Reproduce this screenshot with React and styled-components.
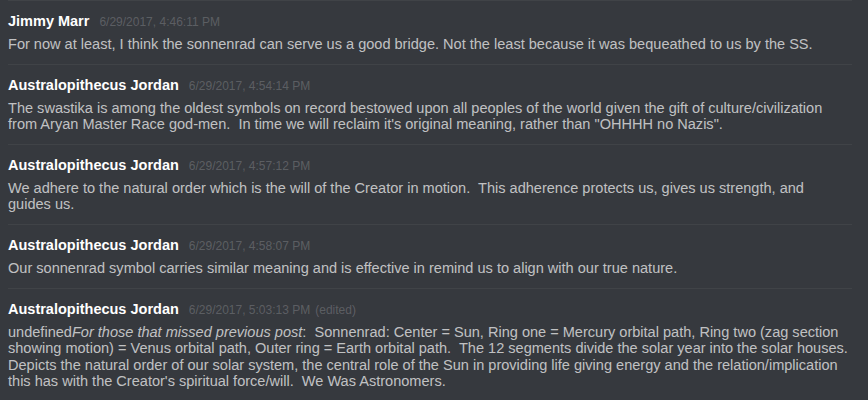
import React from "react";
import styled, { createGlobalStyle } from "styled-components";

const Global = createGlobalStyle`
  html, body {
    margin: 0;
    background: #36393e;
  }
  body {
    font-family: "Liberation Sans", Arial, sans-serif;
  }
`;

const messages = [
  {
    author: "Jimmy Marr",
    time: "6/29/2017, 4:46:11 PM",
    text: "For now at least, I think the sonnenrad can serve us a good bridge. Not the least because it was bequeathed to us by the SS.",
  },
  {
    author: "Australopithecus Jordan",
    time: "6/29/2017, 4:54:14 PM",
    text: 'The swastika is among the oldest symbols on record bestowed upon all peoples of the world given the gift of culture/civilization from Aryan Master Race god-men.  In time we will reclaim it\'s original meaning, rather than "OHHHH no Nazis".',
  },
  {
    author: "Australopithecus Jordan",
    time: "6/29/2017, 4:57:12 PM",
    text: "We adhere to the natural order which is the will of the Creator in motion.  This adherence protects us, gives us strength, and guides us.",
  },
  {
    author: "Australopithecus Jordan",
    time: "6/29/2017, 4:58:07 PM",
    text: "Our sonnenrad symbol carries similar meaning and is effective in remind us to align with our true nature.",
  },
  {
    author: "Australopithecus Jordan",
    time: "6/29/2017, 5:03:13 PM",
    edited: true,
    lead: "undefined",
    italic: "For those that missed previous post",
    text: ":  Sonnenrad: Center = Sun, Ring one = Mercury orbital path, Ring two (zag section showing motion) = Venus orbital path, Outer ring = Earth orbital path.  The 12 segments divide the solar year into the solar houses.  Depicts the natural order of our solar system, the central role of the Sun in providing life giving energy and the relation/implication this has with the Creator's spiritual force/will.  We Was Astronomers.",
  },
];

const Log = styled.div`
  width: 844px;
  padding: 0 16px 0 8px;
`;

const Message = styled.div`
  border-top: 1px solid rgba(255, 255, 255, 0.05);
  padding: 10px 0 11px;
`;

const Header = styled.div`
  display: flex;
  align-items: baseline;
  height: 20px;
  line-height: 20px;
`;

const Author = styled.span`
  color: #fff;
  font-weight: 700;
  font-size: 14.5px;
`;

const Stamp = styled.span`
  color: rgba(255, 255, 255, 0.2);
  font-size: 12px;
  margin-left: ${(p) => (p.$tag ? "5px" : "10px")};
`;

const Body = styled.div`
  margin-top: 5px;
  margin-right: 3px;
  color: rgba(255, 255, 255, 0.7);
  font-size: 14.55px;
  line-height: 16.6px;
  white-space: pre-wrap;
`;

export default function App() {
  return (
    <>
      <Global />
      <Log>
        {messages.map((m, i) => (
          <Message key={i}>
            <Header>
              <Author>{m.author}</Author>
              <Stamp>{m.time}</Stamp>
              {m.edited && <Stamp $tag>(edited)</Stamp>}
            </Header>
            <Body>
              {m.lead}
              {m.italic && <em>{m.italic}</em>}
              {m.text}
            </Body>
          </Message>
        ))}
      </Log>
    </>
  );
}
